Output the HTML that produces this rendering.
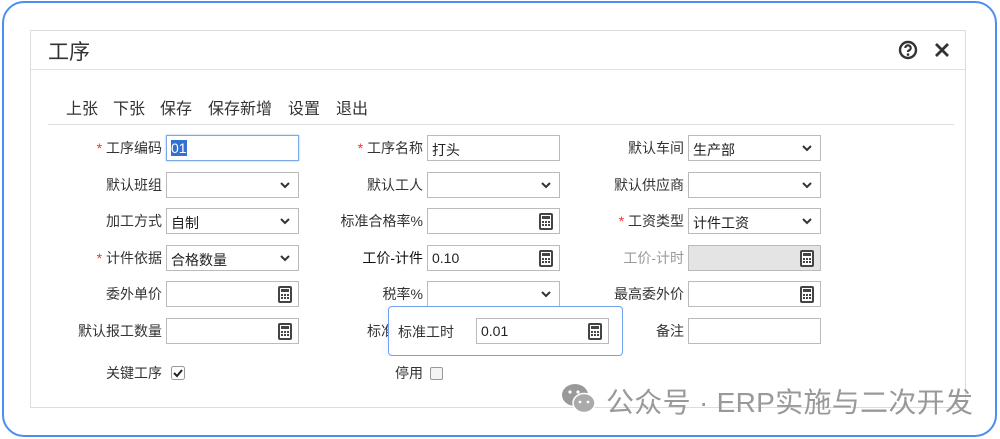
<!DOCTYPE html>
<html><head><meta charset="utf-8"><style>
*{box-sizing:border-box;margin:0;padding:0}
body{width:1000px;height:439px;background:#fff;font-family:"Liberation Sans","Noto Sans CJK SC",sans-serif;position:relative;overflow:hidden;color:#333}
.outer{position:absolute;left:2px;top:1px;width:995px;height:436px;border:2px solid #4a8ef0;border-radius:22px}
.dlg{position:absolute;left:30px;top:30px;width:936px;height:378px;border:1px solid #ddd;background:#fff}
.hdr{position:absolute;left:0;top:0;width:100%;height:39px;border-bottom:1px solid #e2e2e2}
.t{position:absolute;font-size:14px;white-space:nowrap}
.lab{position:absolute;font-size:14px;text-align:right;white-space:nowrap;color:#333}
.star{color:#e33}
.in{position:absolute;height:26px;border:1px solid #bbb;background:#fff;font-size:14px;padding:4px 4px;color:#222}
.chev{position:absolute;right:6px;top:5px;width:14px;height:14px}
.calc{position:absolute;right:6px;top:4px;width:14px;height:17px;border:2px solid #444;border-radius:2px;background:
linear-gradient(#444,#444) 1px 1px/8px 3px no-repeat,#fff}
.calc:after{content:"";position:absolute;left:1px;top:6px;width:8px;height:6px;background:repeating-linear-gradient(90deg,#444 0 2px,transparent 2px 3px),#fff;-webkit-mask:repeating-linear-gradient(#000 0 2px,transparent 2px 3px)}
.cb{position:absolute;width:13px;height:13px;border:1px solid #999;border-radius:2px;background:#f4f4f4}
.tb{position:absolute;top:95px;font-size:16px;color:#333;white-space:nowrap}
</style></head><body>
<div class="outer"></div>
<div class="dlg">
 <div class="hdr">
  <div class="t" style="left:17px;top:5px;font-size:21px;color:#333">工序</div>
  <svg style="position:absolute;left:867px;top:9px" width="20" height="20" viewBox="0 0 20 20"><circle cx="10" cy="10" r="8" fill="none" stroke="#333" stroke-width="2.4"/><path d="M7.3 8a2.7 2.6 0 1 1 3.6 2.4c-.7.3-.9.8-.9 1.6" fill="none" stroke="#333" stroke-width="2.2"/><circle cx="10" cy="14.6" r="1.3" fill="#333"/></svg>
  <svg style="position:absolute;left:902px;top:10px" width="18" height="18" viewBox="0 0 18 18"><path d="M3 3L15 15M15 3L3 15" stroke="#333" stroke-width="2.8"/></svg>
 </div>
 <div style="position:absolute;left:17px;top:93px;width:906px;height:1px;background:#ddd"></div>
</div>
<div class="tb" style="left:66px">上张</div>
<div class="tb" style="left:113px">下张</div>
<div class="tb" style="left:160px">保存</div>
<div class="tb" style="left:208px">保存新增</div>
<div class="tb" style="left:288px">设置</div>
<div class="tb" style="left:336px">退出</div>

<!-- column 1 -->
<div class="lab" style="right:838px;top:138px"><span class="star">*</span> 工序编码</div>
<div class="in" style="left:166px;top:135px;width:133px;border:1.5px solid #7aa8e8;box-shadow:0 0 2px #9bc0f0"><span style="background:#3370d0;color:#fff">01</span></div>
<div class="lab" style="right:838px;top:175px">默认班组</div>
<div class="in" style="left:166px;top:172px;width:133px"><svg class="chev" viewBox="0 0 14 14"><path d="M3 5l4 4 4-4" fill="none" stroke="#333" stroke-width="2"/></svg></div>
<div class="lab" style="right:838px;top:211px">加工方式</div>
<div class="in" style="left:166px;top:208px;width:133px">自制<svg class="chev" viewBox="0 0 14 14"><path d="M3 5l4 4 4-4" fill="none" stroke="#333" stroke-width="2"/></svg></div>
<div class="lab" style="right:838px;top:248px"><span class="star">*</span> 计件依据</div>
<div class="in" style="left:166px;top:245px;width:133px">合格数量<svg class="chev" viewBox="0 0 14 14"><path d="M3 5l4 4 4-4" fill="none" stroke="#333" stroke-width="2"/></svg></div>
<div class="lab" style="right:838px;top:284px">委外单价</div>
<div class="in" style="left:166px;top:281px;width:133px"><div class="calc"></div></div>
<div class="lab" style="right:838px;top:321px">默认报工数量</div>
<div class="in" style="left:166px;top:318px;width:133px"><div class="calc"></div></div>
<div class="lab" style="right:838px;top:363px">关键工序</div>
<svg style="position:absolute;left:171px;top:366px" width="14" height="14" viewBox="0 0 14 14"><rect x=".5" y=".5" width="13" height="13" rx="2" fill="#fff" stroke="#999"/><path d="M3 7l3 3 5-6" fill="none" stroke="#222" stroke-width="2"/></svg>

<!-- column 2 -->
<div class="lab" style="right:577px;top:138px"><span class="star">*</span> 工序名称</div>
<div class="in" style="left:427px;top:135px;width:133px">打头</div>
<div class="lab" style="right:577px;top:175px">默认工人</div>
<div class="in" style="left:427px;top:172px;width:133px"><svg class="chev" viewBox="0 0 14 14"><path d="M3 5l4 4 4-4" fill="none" stroke="#333" stroke-width="2"/></svg></div>
<div class="lab" style="right:577px;top:211px">标准合格率%</div>
<div class="in" style="left:427px;top:208px;width:133px"><div class="calc"></div></div>
<div class="lab" style="right:577px;top:248px;color:#111">工价-计件</div>
<div class="in" style="left:427px;top:245px;width:133px">0.10<div class="calc"></div></div>
<div class="lab" style="right:577px;top:284px">税率%</div>
<div class="in" style="left:427px;top:281px;width:133px"><svg class="chev" viewBox="0 0 14 14"><path d="M3 5l4 4 4-4" fill="none" stroke="#333" stroke-width="2"/></svg></div>
<div class="t" style="left:367px;top:321px">标准工</div>
<div style="position:absolute;left:380px;top:308px;width:60px;height:48px;background:linear-gradient(90deg,rgba(255,255,255,0),rgba(120,170,240,.6))"></div>
<div style="position:absolute;left:388px;top:306px;width:235px;height:50px;border:1px solid #6ea2ee;border-radius:4px;background:#fff"></div>
<div class="t" style="left:398px;top:322px">标准工时</div>
<div class="in" style="left:476px;top:318px;width:133px">0.01<div class="calc"></div></div>
<div class="lab" style="right:577px;top:363px">停用</div>
<div class="cb" style="left:430px;top:367px"></div>

<!-- column 3 -->
<div class="lab" style="right:316px;top:138px">默认车间</div>
<div class="in" style="left:688px;top:135px;width:133px">生产部<svg class="chev" viewBox="0 0 14 14"><path d="M3 5l4 4 4-4" fill="none" stroke="#333" stroke-width="2"/></svg></div>
<div class="lab" style="right:316px;top:175px">默认供应商</div>
<div class="in" style="left:688px;top:172px;width:133px"><svg class="chev" viewBox="0 0 14 14"><path d="M3 5l4 4 4-4" fill="none" stroke="#333" stroke-width="2"/></svg></div>
<div class="lab" style="right:316px;top:211px"><span class="star">*</span> 工资类型</div>
<div class="in" style="left:688px;top:208px;width:133px">计件工资<svg class="chev" viewBox="0 0 14 14"><path d="M3 5l4 4 4-4" fill="none" stroke="#333" stroke-width="2"/></svg></div>
<div class="lab" style="right:316px;top:248px;color:#999">工价-计时</div>
<div class="in" style="left:688px;top:245px;width:133px;background:#e4e4e4"><div class="calc"></div></div>
<div class="lab" style="right:316px;top:284px">最高委外价</div>
<div class="in" style="left:688px;top:281px;width:133px"><div class="calc"></div></div>
<div class="lab" style="right:316px;top:321px">备注</div>
<div class="in" style="left:688px;top:318px;width:133px"></div>

<!-- watermark -->
<svg style="position:absolute;left:560px;top:382px" width="38" height="34" viewBox="0 0 38 34"><ellipse cx="15" cy="13" rx="13" ry="11" fill="#999"/><ellipse cx="24" cy="21" rx="11" ry="9.5" fill="#aaa" stroke="#fff" stroke-width="1.5"/><circle cx="10" cy="10" r="1.6" fill="#fff"/><circle cx="18" cy="10" r="1.6" fill="#fff"/><circle cx="20" cy="20" r="1.4" fill="#fff"/><circle cx="28" cy="20" r="1.4" fill="#fff"/></svg>
<div class="t" style="left:606px;top:381px;font-size:28px;color:#999;letter-spacing:.3px">公众号 · ERP实施与二次开发</div>
</body></html>
